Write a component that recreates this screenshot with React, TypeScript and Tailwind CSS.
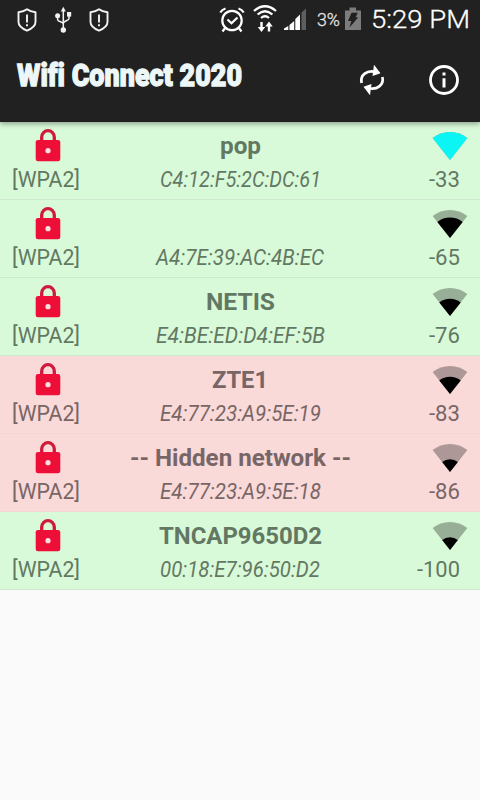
import React from 'react';

interface Network {
  name: string;
  mac: string;
  level: number;
  radius: number;
  duplicated?: boolean;
  nameWidth: number;
  macWidth: number;
}

const networks: Network[] = [
  { name: 'pop', mac: 'C4:12:F5:2C:DC:61', level: -33, radius: 28, nameWidth: 41, macWidth: 161 },
  { name: '', mac: 'A4:7E:39:AC:4B:EC', level: -65, radius: 20.5, nameWidth: 0, macWidth: 168 },
  { name: 'NETIS', mac: 'E4:BE:ED:D4:EF:5B', level: -76, radius: 17.3, nameWidth: 69, macWidth: 169 },
  { name: 'ZTE1', mac: 'E4:77:23:A9:5E:19', level: -83, radius: 17.3, duplicated: true, nameWidth: 56, macWidth: 161 },
  { name: '-- Hidden network --', mac: 'E4:77:23:A9:5E:18', level: -86, radius: 12.7, duplicated: true, nameWidth: 221, macWidth: 161 },
  { name: 'TNCAP9650D2', mac: '00:18:E7:96:50:D2', level: -100, radius: 12.7, nameWidth: 163, macWidth: 160 },
];

// Circular sector with its tip at the bottom centre of the 36x30 icon
function sector(r: number) {
  const dx = r * 0.62;
  const dy = r * 0.785;
  return `M18 29L${18 - dx} ${29 - dy}A${r} ${r} 0 0 1 ${18 + dx} ${29 - dy}Z`;
}

function WifiLevel({ level, radius }: { level: number; radius: number }) {
  return (
    <svg width="36" height="30" viewBox="0 0 36 30">
      <path d={sector(28)} fill="#000" fillOpacity="0.3" />
      <path d={sector(radius)} fill={level > -50 ? '#0cf5f5' : '#000'} />
    </svg>
  );
}

function Lock() {
  return (
    <svg width="26" height="34" viewBox="0 0 26 34" fill="none">
      <path d="M6.7 12.5V9a6.3 6.3 0 0 1 12.6 0v3.5" stroke="#cf1a3c" strokeWidth="3.3" />
      <rect x="0.7" y="12" width="24.6" height="21.3" rx="2.3" fill="#ee0f39" />
      <circle cx="13" cy="22.7" r="2.6" fill="#fbdfe0" />
    </svg>
  );
}

function Shield() {
  return (
    <svg width="20" height="26" viewBox="0 0 20 26" fill="none" stroke="#f2f2f2" strokeWidth="1.9">
      <path d="M10 2.3C7.5 4.2 4.5 5 1.5 5.3v9.7c0 4 4.5 7 8.5 8.7 4-1.7 8.5-4.7 8.5-8.7V5.3C15.5 5 12.5 4.2 10 2.3Z" strokeLinejoin="round" />
      <path d="M10 7.5v8M10 17.2v2" />
    </svg>
  );
}

function Usb() {
  return (
    <svg width="18" height="28" viewBox="0 0 18 28" fill="none" stroke="#f2f2f2" strokeWidth="1.5">
      <path d="M9.3 5v18M3.6 10v3.5c0 2.5 5.7 2 5.7 4.5M15 9v3.5c0 2.5-5.7 2-5.7 5" />
      <path d="M9.3 0.8L11.8 5.5H6.8Z" fill="#f2f2f2" stroke="none" />
      <circle cx="3.6" cy="9.8" r="2.5" fill="#f2f2f2" stroke="none" />
      <path d="M13 6h4.2v4.6h-4.2z" fill="#f2f2f2" stroke="none" />
      <circle cx="9.3" cy="24" r="2.7" fill="#f2f2f2" stroke="none" />
    </svg>
  );
}

function Alarm() {
  return (
    <svg width="26" height="26" viewBox="0 0 26 26" fill="none" stroke="#fff" strokeWidth="2.2">
      <circle cx="13" cy="13.5" r="9.7" />
      <path d="M8.5 12.5l4 3.7 6-5.7M1.3 5.5Q3 2.5 6.5 1.5M24.7 5.5Q23 2.5 19.5 1.5M6.5 20.5l-3 4M19.5 20.5l3 4" />
    </svg>
  );
}

function WifiTransfer() {
  return (
    <svg width="24" height="28" viewBox="0 0 24 28" fill="none" stroke="#fff" strokeWidth="2.2">
      <path d="M1 6Q12 -3.5 23 6M4.6 9.5Q12 3 19.4 9.5M8 13Q12 9.5 16 13" />
      <path d="M8.5 17v6M16 20.5v6" strokeWidth="2.4" />
      <path d="M4.8 22h7.4L8.5 27zM12.3 21.500h7.4L16 16.500z" fill="#fff" stroke="none" />
    </svg>
  );
}

function Signal() {
  return (
    <svg width="24" height="24" viewBox="0 0 24 24" fill="#fff">
      <path d="M1 23v-1.500L5.300 19v4zM6.500 23v-5l4.700-4v9zM12.300 23V12l4.700-4.500V23z" />
      <path d="M18.500 23V5.500l4.500-4V23z" fill="#5e5e5e" />
    </svg>
  );
}

function Battery() {
  return (
    <svg width="18" height="24" viewBox="0 0 18 24">
      <path d="M1 3.500h4.500V0.500h6.500v3H17V23H1z" fill="#7c7c7c" />
      <path d="M7.500 5.800h6.300l-2.200 4.400h2.700L5.500 20.500l1.900-6.500H4z" fill="#202020" />
    </svg>
  );
}

function Refresh() {
  return (
    <svg width="28" height="32" viewBox="0 0 28 32" fill="none" stroke="#fff" strokeWidth="2.7">
      <path d="M3.600 19C1.800 11 9 5.800 17.500 8" />
      <path d="M24.400 13C26.200 21 19 26.200 10.500 24" />
      <path d="M16 0.800L22.500 9.300 14.500 12Z" fill="#fff" stroke="none" />
      <path d="M12 31.200L5.500 22.700 13.500 20Z" fill="#fff" stroke="none" />
    </svg>
  );
}

function Info() {
  return (
    <svg width="30" height="30" viewBox="0 0 30 30">
      <circle cx="15" cy="15" r="13.5" fill="none" stroke="#fff" strokeWidth="2.8" />
      <path d="M13.500 7.500h3v3h-3zM13.500 13.300h3v9.200h-3z" fill="#fff" />
    </svg>
  );
}

// Text stretched to a fixed advance width
function FitText({ text, width, height, baseline, className }: { text: string; width: number; height: number; baseline: number; className: string }) {
  return (
    <svg width={width} height={height} className="overflow-visible">
      <text x="0" y={baseline} textLength={width} lengthAdjust="spacingAndGlyphs" className={className}>
        {text}
      </text>
    </svg>
  );
}

function StatusBar() {
  return (
    <div className="flex h-[38px] items-center pl-[17px] pr-[10px] text-white">
      <div className="mt-px"><Shield /></div>
      <div className="ml-[17px] mt-[2px]"><Usb /></div>
      <div className="ml-[17px] mt-px"><Shield /></div>
      <div className="ml-auto flex items-center">
        <div className="mt-px"><Alarm /></div>
        <div className="ml-2 -mt-px"><WifiTransfer /></div>
        <div className="ml-[6px]"><Signal /></div>
        <div className="ml-[10px] text-[#e4e4e4]">
          <FitText text="3%" width={23} height={24} baseline={19} className="fill-current stroke-current stroke-[0.3px] text-[18px] font-light" />
        </div>
        <div className="ml-[4px] -mt-px"><Battery /></div>
        <div className="ml-[9px]">
          <FitText text="5:29 PM" width={99} height={26} baseline={22} className="fill-current stroke-current stroke-[0.3px] text-[26.5px] font-light" />
        </div>
      </div>
    </div>
  );
}

function NetworkRow({ network }: { network: Network }) {
  return (
    <li
      className={`flex h-[78px] justify-between border-b pl-[12px] pr-[12px] ${
        network.duplicated ? 'border-[#f3d6d6] bg-[#fad9d9] text-[#786666]' : 'border-[#cfe8d2] bg-[#d9fad9] text-[#637863]'
      }`}
    >
      <div className="flex w-[72px] flex-col items-center pt-[6px]">
        <Lock />
        <div className="mt-[2px] mr-[4px]">
          <FitText text="[WPA2]" width={68} height={28} baseline={23} className="fill-current text-[21.5px]" />
        </div>
      </div>
      <div className="flex flex-col items-center pt-[8px]">
        <div className="h-[34px]">
          {network.name && (
            <FitText text={network.name} width={network.nameWidth} height={30} baseline={24} className="fill-current text-[24.5px] font-bold" />
          )}
        </div>
        <FitText text={network.mac} width={network.macWidth} height={28} baseline={23} className="fill-current text-[21.5px] italic" />
      </div>
      <div className="flex w-[72px] flex-col items-end pt-[9px]">
        <WifiLevel level={network.level} radius={network.radius} />
        <div className="mt-[3px] mr-[8px]">
          <FitText text={String(network.level)} width={network.level <= -100 ? 43 : 31} height={28} baseline={23} className="fill-current text-[21.5px]" />
        </div>
      </div>
    </li>
  );
}

export default function App() {
  return (
    <div className="h-[800px] w-[480px] overflow-hidden bg-[#fafafa] font-[Roboto,sans-serif]">
      <header className="relative h-[122px] bg-[#212121] shadow-[0_2px_5px_rgba(0,0,0,0.35)]">
        <StatusBar />
        <div className="flex h-[84px] items-center pl-[17px] pr-[21px] text-[#edf7f7]">
          <h1>
            <FitText
              text="Wifi Connect 2020"
              width={225}
              height={40}
              baseline={26}
              className="fill-current stroke-current stroke-[1.3px] text-[32px] font-black [font-variant-ligatures:none]"
            />
          </h1>
          <div className="ml-auto flex items-center">
            <Refresh />
            <div className="ml-[43px]"><Info /></div>
          </div>
        </div>
      </header>
      <ul>
        {networks.map((network) => (
          <NetworkRow key={network.mac} network={network} />
        ))}
      </ul>
    </div>
  );
}
